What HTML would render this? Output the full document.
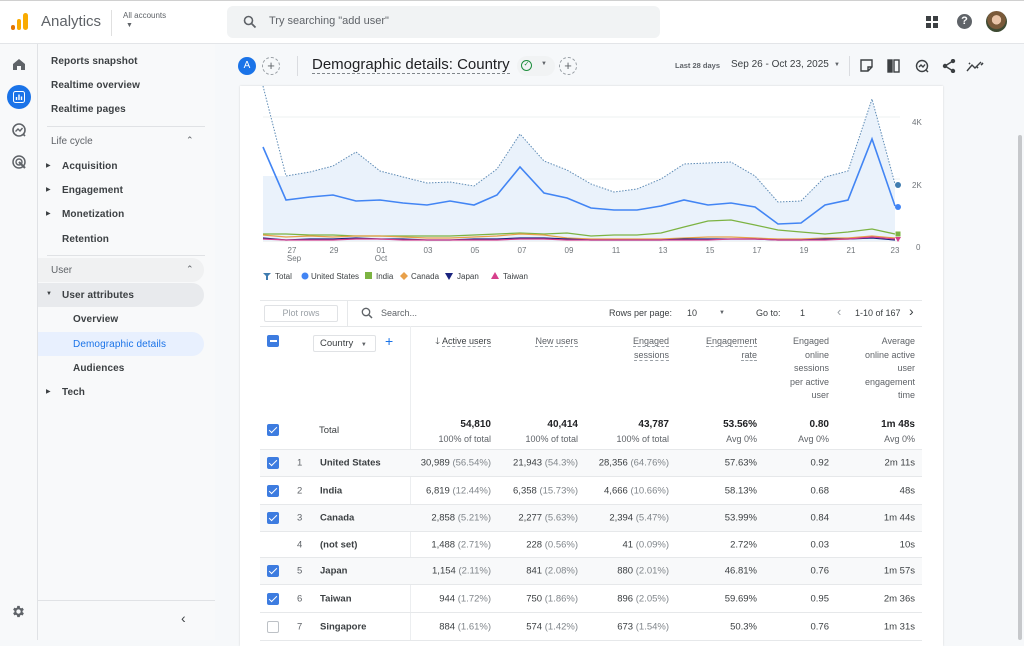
<!DOCTYPE html>
<html><head><meta charset="utf-8">
<style>
*{box-sizing:border-box;margin:0;padding:0}
body{width:1024px;height:640px;overflow:hidden;background:#f6f8fa;font-family:"Liberation Sans",Arial,sans-serif;color:#202124;position:relative}
.a{position:absolute}
.top{left:0;top:0;width:1024px;height:44px;background:#fff;border-bottom:1px solid #e3e5e8;border-top:1px solid #d0d0d0}
.rail{left:0;top:44px;width:38px;height:596px;background:#f8f9fa;border-right:1px solid #e0e2e5}
.nav{left:38px;top:44px;width:177px;height:596px;background:#f8f9fa}
.ni{position:absolute;left:13px;font-size:10px;font-weight:bold;color:#3c4043;letter-spacing:.1px}
.sec{position:absolute;left:13px;font-size:10px;color:#5f6368}
.tri{position:absolute;left:8px;font-size:6px;color:#3c4043}
.card{left:240px;top:86px;width:703px;height:560px;background:#fff;box-shadow:0 0 2px rgba(0,0,0,.15)}
.th{position:absolute;font-size:9px;color:#5f6368;text-align:right;line-height:13.6px}
.u{border-bottom:1px dashed #9aa0a6}
.row{position:absolute;left:260px;width:662px;border-bottom:1px solid #e6e8ea;font-size:9.5px}
.c{position:absolute;text-align:right;top:50%;transform:translateY(-50%);white-space:nowrap;color:#3c4043}
.c span{color:#80868b}
.cb{position:absolute;left:7px;top:50%;margin-top:-6px;width:12px;height:12px;border-radius:2px;background:#3d7ce0}
.cb:after{content:"";position:absolute;left:3.5px;top:1px;width:3px;height:7px;border:solid #fff;border-width:0 1.5px 1.5px 0;transform:rotate(45deg)}
.cbe{position:absolute;left:7px;top:50%;margin-top:-6px;width:12px;height:12px;border-radius:2px;border:1.5px solid #bdc1c6}
.num{position:absolute;left:37px;top:50%;transform:translateY(-50%);color:#5f6368}
.nm{position:absolute;left:60px;top:50%;transform:translateY(-50%);font-weight:bold;color:#3c4043}
</style></head><body>
<div class="a top">
  <svg class="a" style="left:10px;top:11px" width="20" height="20"><rect x="1" y="13" width="4" height="5" rx="2" fill="#e37400"/><rect x="7" y="7" width="4" height="11" rx="2" fill="#f9ab00"/><rect x="13" y="1" width="5" height="17" rx="2.5" fill="#f9ab00"/></svg>
  <div class="a" style="left:41px;top:12px;font-size:15px;color:#5f6368">Analytics</div>
  <div class="a" style="left:111px;top:9px;width:1px;height:26px;background:#e0e0e0"></div>
  <div class="a" style="left:123px;top:10px;font-size:8px;color:#5f6368">All accounts</div>
  <div class="a" style="left:126px;top:21px;font-size:7px;color:#5f6368">▼</div>
  <div class="a" style="left:227px;top:5px;width:433px;height:32px;background:#f1f3f4;border-radius:6px"></div>
  <svg class="a" style="left:243px;top:14px" width="14" height="14"><circle cx="5.5" cy="5.5" r="4" fill="none" stroke="#5f6368" stroke-width="1.6"/><path d="M8.5 8.5L12.5 12.5" stroke="#5f6368" stroke-width="1.8"/></svg>
  <div class="a" style="left:269px;top:14px;font-size:11px;color:#5f6368">Try searching "add user"</div>
  <svg class="a" style="left:925px;top:14px" width="14" height="14" fill="#3c4043"><rect x="1" y="1" width="5" height="5"/><rect x="8" y="1" width="5" height="5"/><rect x="1" y="8" width="5" height="5"/><rect x="8" y="8" width="5" height="5"/></svg>
  <div class="a" style="left:957px;top:13px;width:15px;height:15px;border-radius:50%;background:#5f6368;color:#fff;font-size:11px;font-weight:bold;text-align:center;line-height:15px">?</div>
  <div class="a" style="left:986px;top:10px;width:21px;height:21px;border-radius:50%;background:radial-gradient(circle at 50% 42%,#e9c4a8 0 28%,#7a5a3a 30% 55%,#3d4a32 60%)"></div>
</div>
<div class="a rail">
  <svg class="a" style="left:12px;top:14px" width="14" height="13"><path d="M1 6L7 1L13 6V12H9V8H5V12H1Z" fill="#5f6368"/></svg>
  <div class="a" style="left:7px;top:41px;width:24px;height:24px;border-radius:50%;background:#1a73e8"></div>
  <svg class="a" style="left:13px;top:47px" width="12" height="12"><rect x="0.5" y="0.5" width="11" height="11" rx="2" fill="none" stroke="#fff"/><path d="M3.5 9V6M6 9V3.5M8.5 9V5.5" stroke="#fff" stroke-width="1.4"/></svg>
  <svg class="a" style="left:11px;top:78px" width="16" height="16"><circle cx="8" cy="8" r="6" fill="none" stroke="#5f6368" stroke-width="1.6"/><path d="M4.5 9.5L7 7L9 9L11.5 6" fill="none" stroke="#5f6368" stroke-width="1.4"/><path d="M12 12L14 14" stroke="#5f6368" stroke-width="1.6"/></svg>
  <svg class="a" style="left:11px;top:110px" width="16" height="16"><circle cx="8" cy="8" r="6" fill="none" stroke="#5f6368" stroke-width="1.5"/><circle cx="8" cy="8" r="3" fill="none" stroke="#5f6368" stroke-width="1.4"/><path d="M8 8L14 14" stroke="#5f6368" stroke-width="2"/></svg>
  <svg class="a" style="left:11px;top:560px" width="15" height="15" viewBox="0 0 24 24"><path fill="#5f6368" d="M19.4 13a7.5 7.5 0 0 0 0-2l2.1-1.6-2-3.5-2.5 1a7 7 0 0 0-1.7-1L15 3h-4l-.4 2.7a7 7 0 0 0-1.7 1l-2.5-1-2 3.5L6.6 11a7.5 7.5 0 0 0 0 2l-2.2 1.6 2 3.5 2.5-1a7 7 0 0 0 1.7 1L11 21h4l.4-2.7a7 7 0 0 0 1.7-1l2.5 1 2-3.5zM13 15.5a3.5 3.5 0 1 1 0-7 3.5 3.5 0 0 1 0 7z" transform="translate(-1 0)"/></svg>
</div>
<div class="a nav">
  <div class="ni" style="top:12px">Reports snapshot</div>
  <div class="ni" style="top:36px">Realtime overview</div>
  <div class="ni" style="top:60px">Realtime pages</div>
  <div class="a" style="left:9px;top:82px;width:158px;height:1px;background:#e0e2e5"></div>
  <div class="sec" style="top:92px">Life cycle</div><div class="a" style="left:148px;top:91px;font-size:9px;color:#5f6368">⌃</div>
  <div class="tri" style="top:118px">▶</div><div class="ni" style="left:24px;top:117px">Acquisition</div>
  <div class="tri" style="top:142px">▶</div><div class="ni" style="left:24px;top:141px">Engagement</div>
  <div class="tri" style="top:166px">▶</div><div class="ni" style="left:24px;top:165px">Monetization</div>
  <div class="ni" style="left:24px;top:190px">Retention</div>
  <div class="a" style="left:9px;top:211px;width:158px;height:1px;background:#e0e2e5"></div>
  <div class="a" style="left:0;top:214px;width:166px;height:24px;background:#f0f1f2;border-radius:0 12px 12px 0"></div>
  <div class="sec" style="top:221px">User</div><div class="a" style="left:148px;top:220px;font-size:9px;color:#5f6368">⌃</div>
  <div class="a" style="left:0;top:239px;width:166px;height:24px;background:#e8eaed;border-radius:0 12px 12px 0"></div>
  <div class="tri" style="top:247px">▼</div><div class="ni" style="left:24px;top:246px">User attributes</div>
  <div class="ni" style="left:35px;top:270px">Overview</div>
  <div class="a" style="left:0;top:288px;width:166px;height:24px;background:#e8f0fe;border-radius:0 12px 12px 0"></div>
  <div class="ni" style="left:35px;top:295px;color:#1a73e8;font-weight:normal">Demographic details</div>
  <div class="ni" style="left:35px;top:319px">Audiences</div>
  <div class="tri" style="top:344px">▶</div><div class="ni" style="left:24px;top:343px">Tech</div>
  <div class="a" style="left:0;top:556px;width:177px;height:1px;background:#e0e2e5"></div>
  <div class="a" style="left:143px;top:566px;font-size:14px;color:#3c4043">‹</div>
</div>
<div class="a" style="left:238px;top:57px;width:18px;height:18px;border-radius:50%;background:#1a73e8;color:#fff;font-size:10px;text-align:center;line-height:18px">A</div>
<div class="a" style="left:262px;top:57px;width:18px;height:18px;border-radius:50%;border:1px dashed #9aa0a6;color:#5f6368;font-size:13px;text-align:center;line-height:15px">+</div>
<div class="a" style="left:297px;top:56px;width:1px;height:20px;background:#dadce0"></div>
<div class="a u" style="left:312px;top:56px;font-size:15px;color:#202124;border-bottom-color:#80868b">Demographic details: Country</div>
<div class="a" style="left:517px;top:56px;width:38px;height:20px;border-radius:10px;background:#f1f3f4"></div>
<div class="a" style="left:521px;top:60px;width:11px;height:11px;border-radius:50%;border:1.5px solid #1e8e3e;font-size:7px;color:#1e8e3e;text-align:center;line-height:8px">✓</div>
<div class="a" style="left:541px;top:61px;font-size:6px;color:#5f6368">▼</div>
<div class="a" style="left:559px;top:57px;width:18px;height:18px;border-radius:50%;border:1px dashed #9aa0a6;color:#5f6368;font-size:13px;text-align:center;line-height:15px">+</div>
<div class="a" style="left:675px;top:61px;font-size:7.5px;font-weight:bold;color:#5f6368">Last 28 days</div>
<div class="a" style="left:731px;top:59px;font-size:10px;color:#3c4043">Sep 26 - Oct 23, 2025</div>
<div class="a" style="left:834px;top:62px;font-size:6px;color:#5f6368">▼</div>
<div class="a" style="left:849px;top:56px;width:1px;height:20px;background:#dadce0"></div>
<svg class="a" style="left:860px;top:59px" width="100" height="14" fill="none" stroke="#3c4043" stroke-width="1.4">
  <path d="M1 1H12V8L8 12H1Z M8 12V8H12"/>
  <rect x="28" y="1" width="4" height="12" fill="#3c4043"/><rect x="34" y="1" width="5" height="12"/>
  <circle cx="62" cy="7" r="5.5"/><path d="M59 8L61 6L63 8L65 5.5"/><path d="M66 11L68 13"/>
  <circle cx="85" cy="7" r="1.5" fill="#3c4043"/><circle cx="93" cy="2" r="1.5" fill="#3c4043"/><circle cx="93" cy="12" r="1.5" fill="#3c4043"/><path d="M85 7L93 2M85 7L93 12"/>
</svg>
<svg class="a" style="left:966px;top:59px" width="18" height="14" fill="none" stroke="#3c4043" stroke-width="1.4"><path d="M1 12L6 6L9 9L15 3"/><path d="M3 4L4 5M11 8L12 9M15 6L17 4" stroke-width="1.6"/></svg>
<div class="a" style="left:1018px;top:135px;width:4px;height:505px;background:#c6c8cb;border-radius:2px"></div>
<div class="a card"></div>
<svg class="a" style="left:0;top:0" width="1024" height="300" viewBox="0 0 1024 300">
  <line x1="263" y1="117" x2="900" y2="117" stroke="#eef0f2"/>
  <line x1="263" y1="179" x2="900" y2="179" stroke="#eef0f2"/>
  <line x1="263" y1="241" x2="900" y2="241" stroke="#e6e8ea"/>
  <polygon fill="#eaf2fb" points="263,86 263,176 286,176 310,172 333,166 356,152 380,171 403,177 427,183 450,182 474,186 497,169 520,134 544,161 567,170 591,184 614,192 637,189 661,179 684,164 708,163 731,162 755,176 778,202 801,201 825,177 848,171 872,99 895,184 895,241 263,241"/>
  <polyline fill="none" stroke="#5e8bb5" stroke-width="1" stroke-dasharray="1.5 1.5" points="263,86 286,176 310,172 333,166 356,152 380,171 403,177 427,183 450,182 474,186 497,169 520,134 544,161 567,170 591,184 614,192 637,189 661,179 684,164 708,163 731,162 755,176 778,202 801,201 825,177 848,171 872,99 895,184"/>
  <polyline fill="none" stroke="#4285f4" stroke-width="1.6" points="263,147 286,200 310,197 333,195 356,201 380,200 403,203 427,205 450,201 474,205 497,195 520,167 544,193 567,198 591,208 614,210 637,210 661,206 684,200 708,205 731,203 755,207 778,224 801,223 825,205 848,200 872,139 895,206"/>
  <polyline fill="none" stroke="#7cb342" stroke-width="1.3" points="263,234 286,234 310,235 333,235 356,236 380,236 403,236 427,236 450,236 474,235 497,234 520,233 544,234 567,233 591,236 614,235 637,235 661,233 684,227 708,221 731,220 755,225 778,230 801,232 825,234 848,232 872,229 895,234"/>
  <polyline fill="none" stroke="#e8a04a" stroke-width="1.2" points="263,235 286,237 310,236 333,237 356,236 380,236 403,237 427,238 450,238 474,237 497,236 520,234 544,235 567,238 591,239 614,239 637,239 661,239 684,238 708,237 731,237 755,238 778,239 801,239 825,238 848,238 872,236 895,238"/>
  <polyline fill="none" stroke="#1a237e" stroke-width="1.2" points="263,238 286,240 310,239 333,239 356,238 380,239 403,239 427,240 450,240 474,239 497,239 520,238 544,238 567,239 591,240 614,240 637,240 661,240 684,239 708,239 731,239 755,239 778,240 801,240 825,239 848,239 872,238 895,240"/>
  <polyline fill="none" stroke="#d63f8c" stroke-width="1.2" points="263,239 286,240 310,240 333,240 356,239 380,239 403,240 427,240 450,240 474,240 497,240 520,239 544,239 567,240 591,240 614,240 637,240 661,240 684,240 708,240 731,239 755,239 778,240 801,240 825,240 848,239 872,237 895,239"/>
  <circle cx="898" cy="185" r="3" fill="#3f7cb0"/><circle cx="898" cy="207" r="3" fill="#4285f4"/>
  <rect x="895.5" y="231.5" width="5" height="5" fill="#7cb342"/><path d="M895 237L901 237L898 242Z" fill="#d63f8c"/>
  <text x="912" y="125" font-size="8" fill="#70757a" font-family="Liberation Sans">4K</text>
  <text x="912" y="188" font-size="8" fill="#70757a" font-family="Liberation Sans">2K</text>
  <text x="916" y="250" font-size="8" fill="#70757a" font-family="Liberation Sans">0</text>
  <g font-size="8" fill="#70757a" font-family="Liberation Sans" text-anchor="middle">
    <text x="292" y="253">27</text><text x="294" y="261">Sep</text>
    <text x="334" y="253">29</text><text x="381" y="253">01</text><text x="381" y="261">Oct</text>
    <text x="428" y="253">03</text><text x="475" y="253">05</text><text x="522" y="253">07</text>
    <text x="569" y="253">09</text><text x="616" y="253">11</text><text x="663" y="253">13</text>
    <text x="710" y="253">15</text><text x="757" y="253">17</text><text x="804" y="253">19</text>
    <text x="851" y="253">21</text><text x="895" y="253">23</text>
  </g>
  <g font-size="8" fill="#3c4043" font-family="Liberation Sans">
    <path d="M263 273H271L267 277Z M266 276H268V280H266Z" fill="#3f7cb0"/><text x="275" y="279">Total</text>
    <circle cx="305" cy="276" r="3.5" fill="#4285f4"/><text x="311" y="279">United States</text>
    <rect x="365" y="272" width="7" height="7" fill="#7cb342"/><text x="376" y="279">India</text>
    <path d="M404 272L408 276L404 280L400 276Z" fill="#e8a04a"/><text x="411" y="279">Canada</text>
    <path d="M445 273H453L449 280Z" fill="#1a237e"/><text x="457" y="279">Japan</text>
    <path d="M491 279H499L495 272Z" fill="#d63f8c"/><text x="503" y="279">Taiwan</text>
  </g>
</svg>
<div class="a" style="left:260px;top:300px;width:662px;height:1px;background:#e6e8ea"></div>
<div class="a" style="left:264px;top:305px;width:74px;height:17px;border:1px solid #e0e2e5;border-radius:2px;font-size:9px;color:#9aa0a6;text-align:center;line-height:15px">Plot rows</div>
<div class="a" style="left:347px;top:300px;width:1px;height:26px;background:#e6e8ea"></div>
<svg class="a" style="left:361px;top:307px" width="12" height="12"><circle cx="5" cy="5" r="3.7" fill="none" stroke="#5f6368" stroke-width="1.3"/><path d="M8 8L11 11" stroke="#5f6368" stroke-width="1.5"/></svg>
<div class="a" style="left:381px;top:308px;font-size:9px;color:#5f6368">Search...</div>
<div class="a" style="left:609px;top:308px;font-size:9px;color:#3c4043">Rows per page:</div>
<div class="a" style="left:687px;top:308px;font-size:9px;color:#3c4043">10</div>
<div class="a" style="left:719px;top:310px;font-size:6px;color:#5f6368">▼</div>
<div class="a" style="left:756px;top:308px;font-size:9px;color:#3c4043">Go to:</div>
<div class="a" style="left:800px;top:308px;font-size:9px;color:#3c4043">1</div>
<div class="a" style="left:837px;top:304px;font-size:13px;color:#9aa0a6">‹</div>
<div class="a" style="left:855px;top:308px;font-size:9px;color:#3c4043">1-10 of 167</div>
<div class="a" style="left:909px;top:303px;font-size:14px;color:#3c4043">›</div>
<div class="a" style="left:260px;top:326px;width:662px;height:1px;background:#e6e8ea"></div>
<div class="a" style="left:410px;top:326px;width:1px;height:314px;background:#eceef0"></div>
<div class="a" style="left:267px;top:335px;width:12px;height:12px;border-radius:2px;background:#3d7ce0"><div style="margin:5px 2.5px;width:7px;height:1.6px;background:#fff"></div></div>
<div class="a" style="left:313px;top:335px;width:63px;height:17px;border:1px solid #e0e2e5;border-radius:2px;font-size:9.5px;color:#3c4043;padding:2px 6px">Country <span style="font-size:6px;color:#5f6368;margin-left:5px">▼</span></div>
<div class="a" style="left:385px;top:333px;font-size:14px;color:#1a73e8">+</div>
<div class="th" style="right:533px;top:335px;color:#3c4043">🡓 <span class="u">Active users</span></div>
<div class="th" style="right:446px;top:335px"><span class="u">New users</span></div>
<div class="th" style="right:355px;top:335px"><span class="u">Engaged</span><br><span class="u">sessions</span></div>
<div class="th" style="right:267px;top:335px"><span class="u">Engagement</span><br><span class="u">rate</span></div>
<div class="th" style="right:195px;top:335px">Engaged<br>online<br>sessions<br>per active<br>user</div>
<div class="th" style="right:109px;top:335px">Average<br>online active<br>user<br>engagement<br>time</div>
<div class="a" style="left:267px;top:424px;width:12px;height:12px"><div class="cb" style="left:0;top:0;margin:0"></div></div>
<div class="a" style="left:319px;top:425px;font-size:9.5px;color:#3c4043">Total</div>
<div class="a" style="left:260px;top:449px;width:662px;height:1px;background:#e6e8ea"></div>
<div class="th" style="right:533px;top:417px;line-height:15px"><b style="color:#202124;font-size:10px">54,810</b><br>100% of total</div>
<div class="th" style="right:446px;top:417px;line-height:15px"><b style="color:#202124;font-size:10px">40,414</b><br>100% of total</div>
<div class="th" style="right:355px;top:417px;line-height:15px"><b style="color:#202124;font-size:10px">43,787</b><br>100% of total</div>
<div class="th" style="right:267px;top:417px;line-height:15px"><b style="color:#202124;font-size:10px">53.56%</b><br>Avg 0%</div>
<div class="th" style="right:195px;top:417px;line-height:15px"><b style="color:#202124;font-size:10px">0.80</b><br>Avg 0%</div>
<div class="th" style="right:109px;top:417px;line-height:15px"><b style="color:#202124;font-size:10px">1m 48s</b><br>Avg 0%</div>
<div class="row" style="top:450px;height:27px;background:#f8f9fa"><div class="cb"></div><div class="num">1</div><div class="nm">United States</div>
<div class="c" style="right:431px">30,989 <span>(56.54%)</span></div><div class="c" style="right:344px">21,943 <span>(54.3%)</span></div><div class="c" style="right:253px">28,356 <span>(64.76%)</span></div><div class="c" style="right:165px">57.63%</div><div class="c" style="right:93px">0.92</div><div class="c" style="right:7px">2m 11s</div></div>
<div class="row" style="top:477px;height:28px"><div class="cb"></div><div class="num">2</div><div class="nm">India</div>
<div class="c" style="right:431px">6,819 <span>(12.44%)</span></div><div class="c" style="right:344px">6,358 <span>(15.73%)</span></div><div class="c" style="right:253px">4,666 <span>(10.66%)</span></div><div class="c" style="right:165px">58.13%</div><div class="c" style="right:93px">0.68</div><div class="c" style="right:7px">48s</div></div>
<div class="row" style="top:505px;height:27px;background:#f8f9fa"><div class="cb"></div><div class="num">3</div><div class="nm">Canada</div>
<div class="c" style="right:431px">2,858 <span>(5.21%)</span></div><div class="c" style="right:344px">2,277 <span>(5.63%)</span></div><div class="c" style="right:253px">2,394 <span>(5.47%)</span></div><div class="c" style="right:165px">53.99%</div><div class="c" style="right:93px">0.84</div><div class="c" style="right:7px">1m 44s</div></div>
<div class="row" style="top:532px;height:26px"><div class="num">4</div><div class="nm">(not set)</div>
<div class="c" style="right:431px">1,488 <span>(2.71%)</span></div><div class="c" style="right:344px">228 <span>(0.56%)</span></div><div class="c" style="right:253px">41 <span>(0.09%)</span></div><div class="c" style="right:165px">2.72%</div><div class="c" style="right:93px">0.03</div><div class="c" style="right:7px">10s</div></div>
<div class="row" style="top:558px;height:27px;background:#f8f9fa"><div class="cb"></div><div class="num">5</div><div class="nm">Japan</div>
<div class="c" style="right:431px">1,154 <span>(2.11%)</span></div><div class="c" style="right:344px">841 <span>(2.08%)</span></div><div class="c" style="right:253px">880 <span>(2.01%)</span></div><div class="c" style="right:165px">46.81%</div><div class="c" style="right:93px">0.76</div><div class="c" style="right:7px">1m 57s</div></div>
<div class="row" style="top:585px;height:28px"><div class="cb"></div><div class="num">6</div><div class="nm">Taiwan</div>
<div class="c" style="right:431px">944 <span>(1.72%)</span></div><div class="c" style="right:344px">750 <span>(1.86%)</span></div><div class="c" style="right:253px">896 <span>(2.05%)</span></div><div class="c" style="right:165px">59.69%</div><div class="c" style="right:93px">0.95</div><div class="c" style="right:7px">2m 36s</div></div>
<div class="row" style="top:613px;height:28px"><div class="cbe"></div><div class="num">7</div><div class="nm">Singapore</div>
<div class="c" style="right:431px">884 <span>(1.61%)</span></div><div class="c" style="right:344px">574 <span>(1.42%)</span></div><div class="c" style="right:253px">673 <span>(1.54%)</span></div><div class="c" style="right:165px">50.3%</div><div class="c" style="right:93px">0.76</div><div class="c" style="right:7px">1m 31s</div></div>
</body></html>
